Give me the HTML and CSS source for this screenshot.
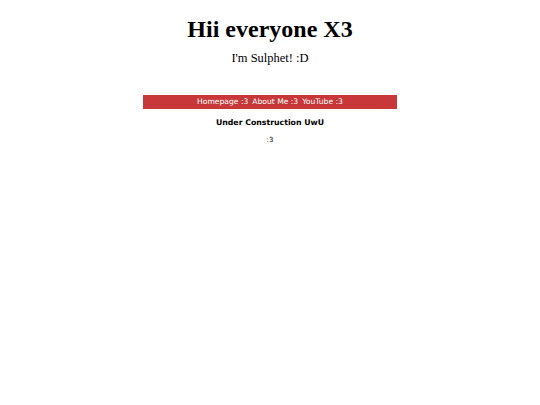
FILE: index.html
```html
<!DOCTYPE html>
<html>
<head>
<meta charset="utf-8">
<link rel="stylesheet" href="styles.css">
</head>
<body>
<header class="hero">
  <h1 class="title">Hii everyone X3</h1>
  <p class="subtitle">I'm Sulphet! :D</p>
</header>
<main class="page">
  <nav class="nav">
    <a class="nav-link" href="#">Homepage :3</a>
    <a class="nav-link" href="#">About Me :3</a>
    <a class="nav-link" href="#">YouTube :3</a>
  </nav>
  <h2 class="section-title">Under Construction UwU</h2>
  <p class="note">:3</p>
</main>
</body>
</html>
```
FILE: styles.css
```css
html, body {
  margin: 0;
  padding: 0;
  background: #ffffff;
}
body {
  color: #000000;
}
.hero {
  text-align: center;
  font-family: "Liberation Serif", serif;
  padding-top: 15px;
}
.title {
  font-size: 24px;
  font-weight: bold;
  margin: 0;
  line-height: 28px;
}
.subtitle {
  font-size: 12.5px;
  margin: 7px 0 0 0;
  line-height: 16px;
}
.page {
  width: 254px;
  margin: 29px auto 0 auto;
  font-family: "DejaVu Sans", Verdana, sans-serif;
  text-align: center;
}
.nav {
  background: #c8383a;
  height: 14px;
  display: flex;
  justify-content: center;
  align-items: center;
  gap: 4px;
}
.nav-link {
  color: #ffffff;
  text-decoration: none;
  font-size: 7.6px;
  line-height: 14px;
}
.section-title {
  font-size: 7.8px;
  font-weight: bold;
  margin: 9px 0 0 0;
  line-height: 10px;
}
.note {
  font-size: 7px;
  margin: 8px 0 0 0;
  line-height: 9px;
}
```
